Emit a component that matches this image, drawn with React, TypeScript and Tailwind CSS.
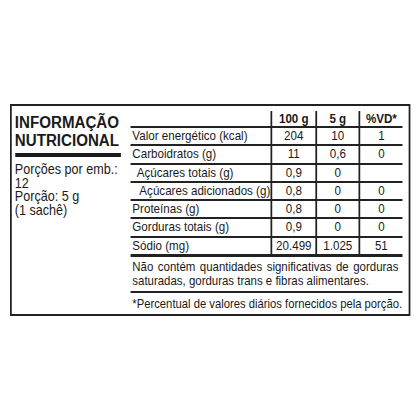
const rows = [
  { label: "Valor energético (kcal)", a: "204", b: "10", c: "1", indent: "" },
  { label: "Carboidratos (g)", a: "11", b: "0,6", c: "0", indent: "" },
  { label: "Açúcares totais (g)", a: "0,9", b: "0", c: "", indent: "pl-[7px]" },
  { label: "Açúcares adicionados (g)", a: "0,8", b: "0", c: "0", indent: "pl-[10px]" },
  { label: "Proteínas (g)", a: "0,8", b: "0", c: "0", indent: "" },
  { label: "Gorduras totais (g)", a: "0,9", b: "0", c: "0", indent: "" },
  { label: "Sódio (mg)", a: "20.499", b: "1.025", c: "51", indent: "" },
];

// the label uses a condensed type; the box is laid out wide and squeezed to 88%
const cols = "grid grid-cols-[159px_51px_49px_50px]";
const cell = "border-l-[2.3px] border-[#222] text-center";

export default function App() {
  return (
    <div
      className="w-[420px] h-[420px] overflow-hidden bg-white pt-[104px] pl-[10px] text-[#1a1a1a]"
      style={{ fontFamily: '"Liberation Sans", Arial, sans-serif' }}
    >
      <div className="flex w-[454.5px] h-[212px] border-y-2 border-x-[2.3px] border-[#222] origin-left scale-x-[0.88]">
        {/* left panel */}
        <div className="w-[135px] pl-[3.5px] pt-[7px]">
          <h1 className="text-[17.2px] leading-[18px] font-bold">
            INFORMAÇÃO
            <br />
            NUTRICIONAL
          </h1>
          <div className="mt-[4px] h-[4px] w-[120px] bg-[#1a1a1a]" />
          <div className="mt-[6px] text-[14.3px] leading-[13.5px]">
            <p>Porções por emb.:</p>
            <p>12</p>
            <p>Porção: 5 g</p>
            <p>(1 sachê)</p>
          </div>
        </div>

        {/* table */}
        <div className="w-[309px] pt-[3px] flex flex-col text-[13.2px]">
          <div className={cols + " h-[19px] border-b-2 border-[#222] font-bold"}>
            <div />
            <div className={cell + " mt-[2px] leading-[15px]"}>100 g</div>
            <div className={cell + " mt-[2px] leading-[15px]"}>5 g</div>
            <div className={cell + " mt-[2px] leading-[15px]"}>%VD*</div>
          </div>
          {rows.map((r, i) => (
            <div
              key={r.label}
              className={
                cols +
                " leading-[16px] border-[#222] " +
                (i === rows.length - 1 ? "h-[19px] border-b-[3px]" : "h-[18.3px] border-b-2")
              }
            >
              <div className={"pl-[2px] whitespace-nowrap " + r.indent}>{r.label}</div>
              <div className={cell}>{r.a}</div>
              <div className={cell}>{r.b}</div>
              <div className={cell}>{r.c}</div>
            </div>
          ))}
          <div className="pl-[2px] pt-[3px] pb-[3px] text-[13px] leading-[14px] border-b-2 border-[#222]">
            <p className="whitespace-nowrap [word-spacing:1.5px]">
              Não contém quantidades significativas de gorduras
            </p>
            <p className="whitespace-nowrap">saturadas, gorduras trans e fibras alimentares.</p>
          </div>
          <p className="pl-[2px] pt-[4px] text-[12.8px] leading-[14px] whitespace-nowrap">
            *Percentual de valores diários fornecidos pela porção.
          </p>
        </div>
      </div>
    </div>
  );
}
